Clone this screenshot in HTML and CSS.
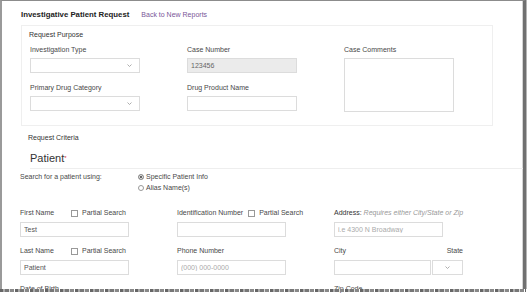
FILE: index.html
```html
<!DOCTYPE html>
<html lang="en">
<head>
  <meta charset="UTF-8" />
  <title>Investigative Patient Request</title>
  <link rel="stylesheet" href="styles.css">
</head>
<body>
  <div class="frame">
    <div class="page">
      <div class="title-row">
        <h1>Investigative Patient Request</h1>
        <a href="#">Back to New Reports</a>
      </div>

      <!-- Request purpose box -->
      <div class="purpose">
        <div class="section-label">Request Purpose</div>
        <div class="purpose-grid">
          <div class="field">
            <label>Investigation Type</label>
            <div class="select">
              <svg width="5" height="3" viewBox="0 0 5 3"><polyline points="0.5,0.5 2.5,2.5 4.5,0.5" fill="none" stroke="#999" stroke-width="0.8"/></svg>
            </div>
          </div>
          <div class="field">
            <label>Case Number</label>
            <input class="input disabled" value="123456" readonly>
          </div>
          <div class="field comments">
            <label>Case Comments</label>
            <textarea class="textarea"></textarea>
          </div>
          <div class="field">
            <label>Primary Drug Category</label>
            <div class="select">
              <svg width="5" height="3" viewBox="0 0 5 3"><polyline points="0.5,0.5 2.5,2.5 4.5,0.5" fill="none" stroke="#999" stroke-width="0.8"/></svg>
            </div>
          </div>
          <div class="field">
            <label>Drug Product Name</label>
            <input class="input">
          </div>
        </div>
      </div>

      <div class="criteria-label">Request Criteria</div>
      <h2 class="patient-head">Patient<span class="req">*</span></h2>

      <div class="search-using">
        <div class="prompt">Search for a patient using:</div>
        <div class="options">
          <div class="option"><span class="radio on"></span>Specific Patient Info</div>
          <div class="option"><span class="radio"></span>Alias Name(s)</div>
        </div>
      </div>

      <div class="patient-grid">
        <div class="field">
          <div class="label-row"><span class="name">First Name</span><span class="check"></span>Partial Search</div>
          <input class="input" value="Test">
        </div>
        <div class="field">
          <div class="label-row"><span class="id">Identification Number</span><span class="check"></span>Partial Search</div>
          <input class="input">
        </div>
        <div class="field">
          <div class="label-row"><span class="strong">Address:</span>&nbsp;<em class="hint">Requires either City/State or Zip</em></div>
          <input class="input" placeholder="i.e 4300 N Broadway">
        </div>

        <div class="field">
          <div class="label-row"><span class="name">Last Name</span><span class="check"></span>Partial Search</div>
          <input class="input" value="Patient">
        </div>
        <div class="field">
          <div class="label-row">Phone Number</div>
          <input class="input" placeholder="(000) 000-0000">
        </div>
        <div class="field">
          <div class="city-state">
            <div class="label-row">City</div>
            <div class="label-row state-label">State</div>
            <input class="input city">
            <div class="select state">
              <svg width="5" height="3" viewBox="0 0 5 3"><polyline points="0.5,0.5 2.5,2.5 4.5,0.5" fill="none" stroke="#999" stroke-width="0.8"/></svg>
            </div>
          </div>
        </div>

        <div class="field">
          <div class="label-row">Date of Birth</div>
        </div>
        <div class="field"></div>
        <div class="field">
          <div class="label-row">Zip Code</div>
        </div>
      </div>
    </div>
  </div>
  <div class="tear"></div>
</body>
</html>
```

FILE: styles.css
```css
* {
  margin: 0;
  padding: 0;
  box-sizing: border-box;
  font-family: "Liberation Sans", Arial, sans-serif;
}

body {
  background: #fff;
  width: 528px;
  height: 294px;
  overflow: hidden;
}

.frame {
  width: 526px;
  height: 289px;
  border-top: 1px solid #8c8c8c;
  border-left: 2px solid #9a9a9a;
  border-right: 3px solid #707070;
  box-shadow: 1px 0 0 #b5b5b5, inset -1px 0 0 #d4d4d4;
}

.page {
  padding: 9px 0 0 18px;
  font-size: 7px;
  color: #484848;
}

.title-row {
  display: flex;
  align-items: baseline;
  gap: 12px;
  margin-left: 1px;
  height: 10px;
  line-height: 10px;
}

.title-row h1 {
  font-size: 7.8px;
  font-weight: bold;
  color: #222;
}

.title-row a {
  font-size: 7px;
  color: #7a5698;
  text-decoration: none;
}

.purpose {
  margin: 5px 0 0 1px;
  width: 472px;
  border: 1px solid #efefef;
  padding: 4px 0 13px 8px;
}

.section-label {
  line-height: 10px;
  color: #333;
  margin-left: -1px;
}

.purpose-grid {
  display: grid;
  grid-template-columns: 157px 157px 110px;
  row-gap: 9px;
  margin-top: 5px;
}

.field label {
  display: block;
  line-height: 10px;
  margin-bottom: 3px;
}

.comments {
  grid-row: span 2;
}

.input {
  display: block;
  width: 110px;
  height: 15px;
  border: 1px solid #dcdcdc;
  background: #fff;
  font-size: 7px;
  color: #555;
  padding: 0 3px;
  outline: none;
}

.input::placeholder {
  color: #aaa;
}

.input.disabled {
  background: #ebebeb;
  color: #666;
}

.textarea {
  display: block;
  width: 110px;
  height: 54px;
  border: 1px solid #dcdcdc;
  resize: none;
  outline: none;
}

.select {
  width: 110px;
  height: 15px;
  border: 1px solid #dcdcdc;
  background: #fff;
  display: flex;
  align-items: center;
  justify-content: flex-end;
  padding-right: 7px;
}

.criteria-label {
  margin: 7px 0 0 8px;
  line-height: 10px;
  color: #333;
}

.patient-head {
  margin: 9px 0 0 10px;
  font-size: 11px;
  font-weight: normal;
  line-height: 13px;
  color: #333;
  padding-bottom: 3px;
  border-bottom: 1px solid #eee;
}

.req {
  color: #d33;
  font-size: 6px;
  vertical-align: top;
}

.search-using {
  display: flex;
  margin-top: 3px;
}

.prompt {
  width: 118px;
  line-height: 10px;
}

.options {
  margin-top: -1px;
}

.option {
  display: flex;
  align-items: center;
  gap: 2px;
  line-height: 11px;
}

.radio {
  width: 6px;
  height: 6px;
  border-radius: 50%;
  border: 1px solid #999;
  background: #fff;
}

.radio.on {
  background: #333;
  box-shadow: inset 0 0 0 1px #fff;
}

.patient-grid {
  display: grid;
  grid-template-columns: 157px 157px 157px;
  row-gap: 9px;
  margin-top: 15px;
}

.patient-grid .input {
  width: 109px;
}

.label-row {
  display: flex;
  align-items: center;
  line-height: 10px;
  margin-bottom: 4px;
  white-space: nowrap;
}

.label-row .name {
  width: 51px;
}

.label-row .id {
  margin-right: 5px;
}

.check {
  width: 7px;
  height: 7px;
  border: 1px solid #999;
  margin-right: 4px;
}

.strong {
  color: #333;
}

.hint {
  color: #999;
}

.city-state {
  display: grid;
  grid-template-columns: 97px 31px;
  column-gap: 1px;
}

.state-label {
  justify-content: flex-end;
}

.patient-grid .input.city {
  width: 97px;
}

.select.state {
  width: 31px;
  justify-content: center;
  padding-right: 0;
}

/* torn bottom edge, drawn over the last row of labels */
.tear {
  position: relative;
  width: 526px;
  height: 3px;
  background: repeating-linear-gradient(90deg, #666 0 3px, #aaa 3px 5px, #777 5px 9px, #ddd 9px 10px, #888 10px 14px, #fff 14px 15px);
}
```
